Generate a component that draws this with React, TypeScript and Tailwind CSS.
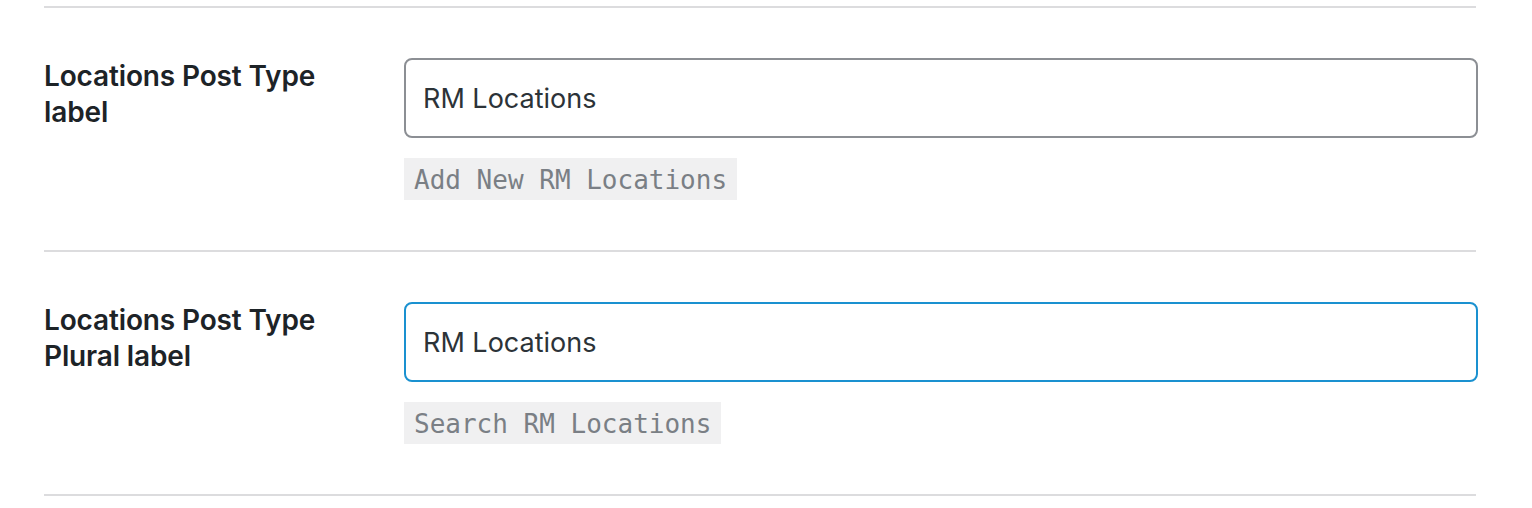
const rows = [
  { label: ['Locations Post Type', 'label'], value: 'RM Locations', hint: 'Add New RM Locations', focused: false },
  { label: ['Locations Post Type', 'Plural label'], value: 'RM Locations', hint: 'Search RM Locations', focused: true },
]

export default function App() {
  return (
    <div className="w-[1532px] h-[508px] bg-white pt-[6px] pl-[44px] font-['Inter','Noto_Sans',sans-serif]">
      <div className="w-[1432px]">
        {rows.map((row, i) => (
          <div key={i} className="border-t-2 border-[#dcdcde] flex pt-[50px] pb-[50px]">
            <div className="w-[360px] shrink-0 text-[28px] leading-[36px] font-semibold text-[#1d2327] tracking-[-0.005em]">
              {row.label[0]}
              <br />
              {row.label[1]}
            </div>
            <div className="flex flex-col items-start w-[1074px] shrink-0">
              <input
                readOnly
                defaultValue={row.value}
                className={`w-full h-[80px] rounded-[8px] border-2 px-[17px] text-[27px] text-[#2c3338] outline-none bg-white ${
                  row.focused ? 'border-[#1a91d0]' : 'border-[#8c8f94]'
                }`}
              />
              <code className="mt-[20px] bg-[#f0f0f1] px-[10px] pt-[3px] h-[42px] flex items-center text-[26px] text-[#7a7f85] font-['DejaVu_Sans_Mono',monospace]">
                {row.hint}
              </code>
            </div>
          </div>
        ))}
        <div className="border-t-2 border-[#dcdcde]" />
      </div>
    </div>
  )
}
